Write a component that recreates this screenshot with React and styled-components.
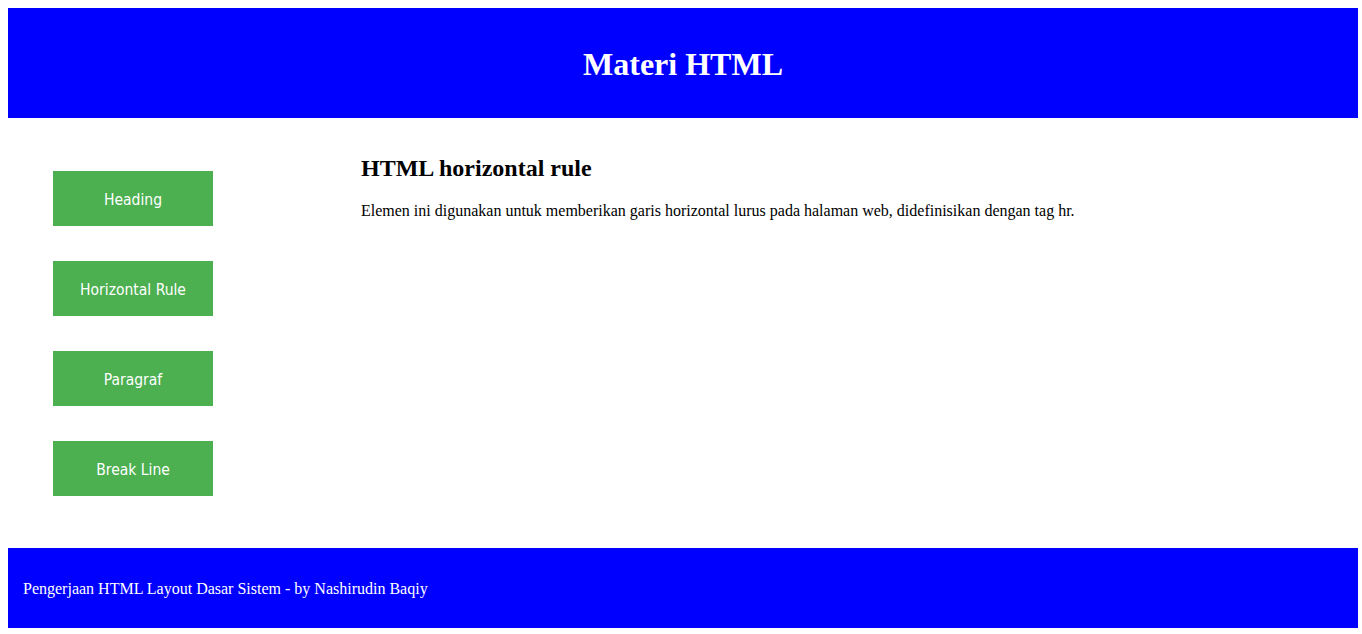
import React from 'react';
import styled, { createGlobalStyle } from 'styled-components';

const GlobalStyle = createGlobalStyle`
    body {
        margin: 8px 4px 0px 8px;
        font-family: "Liberation Serif", "Times New Roman", serif;
        background: #ffffff;
        color: #000000;
    }
`

const Header = styled.header`
    background-color: #0000ff;
    height: 110px;
    padding-top: 2px;
    box-sizing: border-box;
    display: flex;
    align-items: center;
    justify-content: center;
`

const Title = styled.h1`
    color: white;
    font-size: 32px;
    font-weight: 700;
    margin: 0px;
`

const Main = styled.div`
    display: flex;
    flex-direction: row;
    height: 430px;
`

const Sidebar = styled.nav`
    width: 250px;
    display: flex;
    flex-direction: column;
    align-items: center;
    gap: 35px;
    padding-top: 53px;
    box-sizing: border-box;
`

const MenuButton = styled.a`
    display: flex;
    align-items: center;
    justify-content: center;
    width: 160px;
    height: 55px;
    padding-top: 2px;
    box-sizing: border-box;
    background-color: #4caf50;
    color: white;
    font-family: "DejaVu Sans Condensed", "DejaVu Sans", Tahoma, sans-serif;
    font-size: 15.5px;
    text-decoration: none;
`

const Content = styled.section`
    flex: 1;
    padding-left: 103px;
    padding-top: 17px;
`

const ContentTitle = styled.h2`
    font-size: 24px;
    font-weight: 700;
    margin: 20px 0px 20px 0px;
`

const ContentText = styled.p`
    font-size: 16px;
    margin: 0px;
`

const Footer = styled.footer`
    background-color: #0000ff;
    height: 80px;
    display: flex;
    align-items: center;
    padding-left: 15px;
    padding-top: 2px;
    box-sizing: border-box;
    color: white;
    font-size: 16px;
`

const menu = ['Heading', 'Horizontal Rule', 'Paragraf', 'Break Line'];

export default function App() {
    return (
        <div>
            <GlobalStyle />
            <Header>
                <Title>Materi HTML</Title>
            </Header>
            <Main>
                <Sidebar>
                    {menu.map((item) => (
                        <MenuButton key={item}>{item}</MenuButton>
                    ))}
                </Sidebar>
                <Content>
                    <ContentTitle>HTML horizontal rule</ContentTitle>
                    <ContentText>Elemen ini digunakan untuk memberikan garis horizontal lurus pada halaman web, didefinisikan dengan tag hr.</ContentText>
                </Content>
            </Main>
            <Footer>Pengerjaan HTML Layout Dasar Sistem - by Nashirudin Baqiy</Footer>
        </div>
    );
}
